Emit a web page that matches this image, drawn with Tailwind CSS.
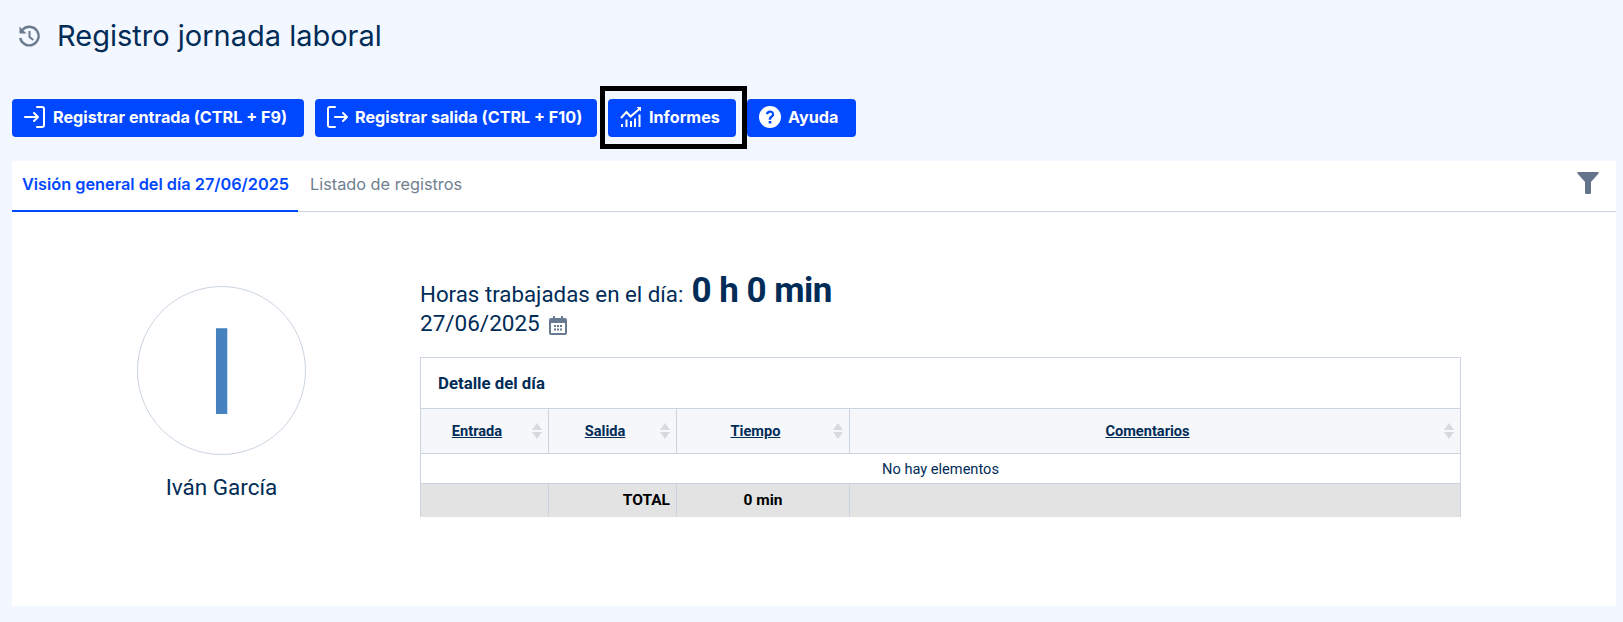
<!DOCTYPE html>
<html lang="es">
<head>
    <meta charset="UTF-8">
    <title>Registro jornada laboral</title>
    <script src="https://cdn.jsdelivr.net/npm/@tailwindcss/browser@4"></script>
</head>
<body class="bg-[#f3f7ff] h-[622px] overflow-hidden font-['Roboto',sans-serif] text-[#012c57]">
    <div class="pl-[12px] pr-[7px] pt-[16px]">
        <!-- Titulo -->
        <div class="flex items-center h-[40px] pl-[5px]">
            <svg class="w-[24px] h-[24px] mr-[16px] text-[#6a7b8e]" viewBox="0 0 24 24" fill="none" stroke="currentColor" stroke-width="2.400"><path d="M5.500 5.700A9.300 9.300 0 1 1 3.200 14"/><path d="M2.500 2.500v7h7z" fill="currentColor" stroke="none"/><path d="M12.500 7v6l3.800 3" stroke-width="2"/></svg>
            <h1 class="font-['Inter',sans-serif] text-[29px] font-normal">Registro jornada laboral</h1>
        </div>

        <!-- Botones -->
        <div class="flex gap-[11px] mt-[43px] font-['Inter',sans-serif] text-[16.200px] font-bold text-white">
            <button class="flex items-center h-[38px] w-[292px] pl-[12px] pb-[2px] bg-[#0048ff] rounded-[4px]">
                <svg class="w-[22px] h-[24px] mr-[7px]" viewBox="0 0 22 24" fill="none" stroke="currentColor" stroke-width="2" stroke-linecap="round" stroke-linejoin="round"><path d="M1 12h13M10 8l4 4-4 4M13 2h5a2 2 0 0 1 2 2v16a2 2 0 0 1-2 2h-5"/></svg>
                Registrar entrada (CTRL + F9)
            </button>
            <button class="flex items-center h-[38px] w-[282px] pl-[12px] pb-[2px] bg-[#0048ff] rounded-[4px]">
                <svg class="w-[22px] h-[24px] mr-[6px]" viewBox="0 0 22 24" fill="none" stroke="currentColor" stroke-width="2" stroke-linecap="round" stroke-linejoin="round"><path d="M8 2H3a2 2 0 0 0-2 2v16a2 2 0 0 0 2 2h5M8 12h12M16 8l4 4-4 4"/></svg>
                Registrar salida (CTRL + F10)
            </button>
            <div class="relative">
                <button class="flex items-center h-[38px] w-[128px] pl-[12px] pb-[2px] bg-[#0048ff] rounded-[4px]">
                    <svg class="w-[22px] h-[22px] mr-[7px]" viewBox="0 0 22 22" fill="currentColor"><path d="M1 12l5.500-6 4 4.500L20 2.500" fill="none" stroke="currentColor" stroke-width="2"/><path d="M16.500 1H21v4.500zM1 18h2v3H1zM5.500 13.500h2V21h-2zM10 15h2v6h-2zM14 12.500h2V21h-2zM18.500 8.500h2V21h-2z"/></svg>
                    Informes
                </button>
                <span class="absolute -left-[8px] -right-[11px] -top-[13px] -bottom-[12px] border-[5px] border-black pointer-events-none"></span>
            </div>
            <button class="flex items-center h-[38px] w-[109px] pl-[11px] pb-[2px] bg-[#0048ff] rounded-[4px]">
                <svg class="w-[24px] h-[24px] mr-[6px]" viewBox="0 0 24 24" fill="currentColor"><path fill-rule="evenodd" d="M12 1a11 11 0 1 0 0 22 11 11 0 0 0 0-22zm1.300 17.500h-2.600V16h2.600v2.500zM15.800 11c-.6.800-1.300 1.200-1.800 1.700-.5.500-.8 1-.8 2h-2.500c0-1.700.5-2.500 1.200-3.200.6-.6 1.400-1 1.900-1.600.7-.9.1-2.200-1.600-2.200-1.300 0-1.900.9-2.100 1.900L7.800 8.700C8.300 6.900 9.800 5.500 12 5.500c1.700 0 2.900.8 3.500 1.700.6.900.9 2.600.3 3.800z"/></svg>
                Ayuda
            </button>
        </div>

        <!-- Tarjeta -->
        <div class="bg-white mt-[24px] h-[445px]">
            <div class="flex items-end justify-between h-[51px] border-b border-[#cbd5e1] font-['Inter',sans-serif] text-[16.300px]">
                <div class="flex items-end h-full">
                    <div class="flex items-center w-[286px] h-[51px] -mb-px pl-[10px] pb-[2px] border-b-2 border-[#0048ff] text-[#0048ff] font-semibold whitespace-nowrap">Visión general del día 27/06/2025</div>
                    <div class="flex items-center h-[51px] pl-[12px] pb-[2px] text-[#6f8090]">Listado de registros</div>
                </div>
                <svg class="w-[22px] h-[22px] mr-[17px] mb-[17px] text-[#64748b]" viewBox="0 0 22 22" fill="currentColor"><path d="M0.500 0h21v1.500L14 10v11a1.500 1.500 0 0 1-1.500 1h-3A1.500 1.500 0 0 1 8 21V10L.500 1.500z"/></svg>
            </div>

            <div class="flex pt-[74px]">
                <!-- Usuario -->
                <div class="w-[408px] pl-[125px] shrink-0">
                    <div class="flex items-center justify-center w-[169px] h-[169px] pt-[4px] rounded-full border border-[#cbd5e1] text-[120px] leading-none text-[#4682c0]">I</div>
                    <div class="w-[169px] mt-[18px] text-center text-[22.500px] leading-[28px]">Iván García</div>
                </div>

                <!-- Detalle -->
                <div class="w-[1041px] -mt-[14px]">
                    <div class="flex items-baseline h-[39px] text-[22.300px] leading-[39px]">
                        Horas trabajadas en el día:
                        <span class="ml-[8px] text-[35px] leading-[38px] font-bold tracking-[-0.500px]">0 h 0 min</span>
                    </div>
                    <div class="flex items-center h-[26px] text-[22.500px]">
                        27/06/2025
                        <svg class="w-[18px] h-[19px] ml-[9px] mt-[3px] text-[#677a91]" viewBox="0 0 18 19" fill="currentColor"><path fill-rule="evenodd" d="M4 0h2v2h6V0h2v2h2a2 2 0 0 1 2 2v13a2 2 0 0 1-2 2H2a2 2 0 0 1-2-2V4a2 2 0 0 1 2-2h2zM2 7v10h14V7zM5 9h2v2H5zM8 9h2v2H8zM11 9h2v2h-2zM5 12.500h2v2H5zM8 12.500h2v2H8zM11 12.500h2v2h-2z"/></svg>
                    </div>

                    <table class="mt-[20px] w-[1041px] table-fixed border-collapse border-x border-t border-[#cbd5e1] text-[14.600px]">
                        <colgroup><col class="w-[128px]"><col class="w-[128px]"><col class="w-[173px]"><col></colgroup>
                        <thead>
                            <tr class="h-[51px]">
                                <th colspan="4" class="border border-[#cbd5e1] pl-[17px] pt-px text-left text-[16.800px] font-bold">Detalle del día</th>
                            </tr>
                            <tr class="h-[45px] bg-[#f5f7fa]">
                                <th class="relative border border-[#cbd5e1] pr-[15px] pt-[2px] font-bold"><span class="underline">Entrada</span><span class="absolute right-[6px] top-[14px] flex flex-col gap-[2px]"><svg class="w-[10px] h-[7px] text-[#d6d9dd]" viewBox="0 0 10 7" fill="currentColor"><path d="M5 0l5 7H0z"/></svg><svg class="w-[10px] h-[7px] text-[#d6d9dd]" viewBox="0 0 10 7" fill="currentColor"><path d="M0 0h10L5 7z"/></svg></span></th>
                                <th class="relative border border-[#cbd5e1] pr-[15px] pt-[2px] font-bold"><span class="underline">Salida</span><span class="absolute right-[6px] top-[14px] flex flex-col gap-[2px]"><svg class="w-[10px] h-[7px] text-[#d6d9dd]" viewBox="0 0 10 7" fill="currentColor"><path d="M5 0l5 7H0z"/></svg><svg class="w-[10px] h-[7px] text-[#d6d9dd]" viewBox="0 0 10 7" fill="currentColor"><path d="M0 0h10L5 7z"/></svg></span></th>
                                <th class="relative border border-[#cbd5e1] pr-[15px] pt-[2px] font-bold"><span class="underline">Tiempo</span><span class="absolute right-[6px] top-[14px] flex flex-col gap-[2px]"><svg class="w-[10px] h-[7px] text-[#d6d9dd]" viewBox="0 0 10 7" fill="currentColor"><path d="M5 0l5 7H0z"/></svg><svg class="w-[10px] h-[7px] text-[#d6d9dd]" viewBox="0 0 10 7" fill="currentColor"><path d="M0 0h10L5 7z"/></svg></span></th>
                                <th class="relative border border-[#cbd5e1] pr-[15px] pt-[2px] font-bold"><span class="underline">Comentarios</span><span class="absolute right-[6px] top-[14px] flex flex-col gap-[2px]"><svg class="w-[10px] h-[7px] text-[#d6d9dd]" viewBox="0 0 10 7" fill="currentColor"><path d="M5 0l5 7H0z"/></svg><svg class="w-[10px] h-[7px] text-[#d6d9dd]" viewBox="0 0 10 7" fill="currentColor"><path d="M0 0h10L5 7z"/></svg></span></th>
                            </tr>
                        </thead>
                        <tbody>
                            <tr class="h-[30px]">
                                <td colspan="4" class="border border-[#cbd5e1] pt-[2px] text-center">No hay elementos</td>
                            </tr>
                        </tbody>
                        <tfoot>
                            <tr class="h-[33px] bg-[#e3e3e3] text-black font-bold text-[15.500px]">
                                <td class="border-x border-[#cbd5e1]"></td>
                                <td class="border-x border-[#cbd5e1] text-right pr-[6px]">TOTAL</td>
                                <td class="border-x border-[#cbd5e1] text-center">0 min</td>
                                <td class="border-x border-[#cbd5e1]"></td>
                            </tr>
                        </tfoot>
                    </table>
                </div>
            </div>
        </div>
    </div>
</body>
</html>
